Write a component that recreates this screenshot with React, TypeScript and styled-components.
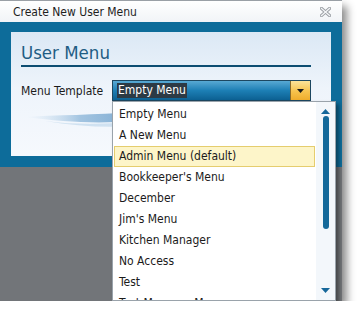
import React from 'react';
import styled, { createGlobalStyle } from 'styled-components';

const GlobalStyle = createGlobalStyle`
  html, body {
    margin: 0;
    padding: 0;
    background: #ffffff;
  }
  body {
    font-family: Tahoma, "DejaVu Sans Condensed", "Liberation Sans", sans-serif;
    font-size: 12px;
    color: #1b1b1b;
  }
`;

const templates = [
  'Empty Menu',
  'A New Menu',
  'Admin Menu (default)',
  "Bookkeeper's Menu",
  'December',
  "Jim's Menu",
  'Kitchen Manager',
  'No Access',
  'Test',
  'Test Manager Menu',
];

const App: React.FC = () => {
  return (
    <>
      <GlobalStyle />
      <Window>
        <TitleBar>
          <Title>Create New User Menu</Title>
          <CloseIcon />
        </TitleBar>
        <Frame>
          <Panel>
            <Heading>User Menu</Heading>
            <Row>
              <Label>Menu Template</Label>
              <Combo>
                <ComboField>
                  <Selected>Empty Menu</Selected>
                </ComboField>
                <ComboButton>
                  <svg width="7" height="4" viewBox="0 0 7 4">
                    <path d="M0 0 H7 L3.5 4 Z" fill="#1a1a1a" />
                  </svg>
                </ComboButton>
                <List>
                  <Items>
                    {templates.map((t, i) => (
                      <Item key={t} $active={i === 2}>{t}</Item>
                    ))}
                  </Items>
                  <Scrollbar>
                    <svg width="9" height="5" viewBox="0 0 9 5">
                      <path d="M0 5 L4.5 0 L9 5 Z" fill="#16679a" />
                    </svg>
                    <Thumb />
                    <svg width="9" height="5" viewBox="0 0 9 5">
                      <path d="M0 0 H9 L4.5 5 Z" fill="#16679a" />
                    </svg>
                  </Scrollbar>
                </List>
              </Combo>
            </Row>
            <Swoosh width="110" height="24" viewBox="0 0 110 24">
              <defs>
                <linearGradient id="sw" x1="0" x2="1" y1="0" y2="0">
                  <stop offset="0" stopColor="#cfe2f2" stopOpacity="0" />
                  <stop offset="0.5" stopColor="#8fb8da" />
                  <stop offset="1" stopColor="#5f97c6" />
                </linearGradient>
              </defs>
              <path d="M0 10 C30 8 70 8 110 5 L110 14 C70 17 40 15 0 10 Z" fill="url(#sw)" opacity="0.8" />
              <path d="M20 14 C50 18 80 17 110 15 L110 19 C80 21 50 19 20 14 Z" fill="#b9d3ea" opacity="0.6" />
            </Swoosh>
          </Panel>
        </Frame>
        <Backdrop />
      </Window>
    </>
  );
};

const CloseIcon: React.FC = () => (
  <svg width="11" height="10" viewBox="0 0 11 10">
    <path d="M1.5 1.5 L9.5 8.5 M9.5 1.5 L1.5 8.5" stroke="#9a9ea3" strokeWidth="3.2" strokeLinecap="square" />
    <path d="M1.5 1.5 L9.5 8.5 M9.5 1.5 L1.5 8.5" stroke="#f4f6f8" strokeWidth="1.3" strokeLinecap="square" />
  </svg>
);

export default App;

const Window = styled.div`
  width: 342px;
  height: 301px;
  display: flex;
  flex-direction: column;
  border-top: 1px solid #9aa0a6;
  box-sizing: border-box;
  box-shadow: 5px 6px 8px rgba(0, 0, 0, 0.45);
`;

const TitleBar = styled.div`
  flex-shrink: 0;
  height: 21px;
  display: flex;
  align-items: center;
  justify-content: space-between;
  padding: 0 11px 0 13px;
  background: linear-gradient(#ffffff, #f1f4f7);
`;

const Title = styled.span`
  font-size: 12px;
  color: #1e1e1e;
`;

const Frame = styled.div`
  flex-shrink: 0;
  background: #0d6c9a;
  padding: 10px 11px 11px 11px;
`;

const Panel = styled.div`
  height: 124px;
  box-sizing: border-box;
  padding: 10px 20px 0 10px;
  background: linear-gradient(#dbe8f5, #eef4fb 45%, #f6f9fd);
`;

const Heading = styled.h2`
  margin: 0;
  font-weight: normal;
  font-size: 18.5px;
  line-height: 22px;
  color: #1f5d84;
  padding-bottom: 1px;
  border-bottom: 2px solid #0c4d72;
`;

const Row = styled.div`
  display: flex;
  align-items: center;
  margin-top: 13px;
`;

const Label = styled.span`
  width: 91px;
  font-size: 12px;
`;

const Combo = styled.div`
  position: relative;
  width: 199px;
  height: 21px;
  display: flex;
  box-sizing: border-box;
  border: 1px solid #1d4760;
`;

const ComboField = styled.div`
  flex: 1;
  display: flex;
  align-items: center;
  padding-left: 4px;
  background: linear-gradient(#58a9d4, #1d7fb5 50%, #0c6092);
`;

const Selected = styled.span`
  background: #2c3a45;
  color: #ffffff;
  font-size: 12px;
  line-height: 15px;
  padding: 0 1px;
`;

const ComboButton = styled.div`
  width: 19px;
  display: flex;
  align-items: center;
  justify-content: center;
  border-left: 1px solid #8a6a2a;
  background: linear-gradient(#fbe39a, #f6c24d 55%, #efad2c);
`;

const List = styled.div`
  position: absolute;
  top: 20px;
  left: -1px;
  width: 224px;
  height: 200px;
  box-sizing: border-box;
  display: flex;
  background: #ffffff;
  border: 1px solid #9aa3ab;
  box-shadow: 3px 3px 4px rgba(0, 0, 0, 0.4);
  overflow: hidden;
  z-index: 2;
`;

const Items = styled.div`
  flex: 1;
  padding: 2px 1px 0 1px;
`;

const Item = styled.div<{ $active?: boolean }>`
  height: 21px;
  line-height: 19px;
  box-sizing: border-box;
  padding-left: 4px;
  font-size: 12px;
  color: #1b1b1b;
  white-space: nowrap;
  border: 1px solid ${({ $active }) => ($active ? '#e5cd6e' : 'transparent')};
  background: ${({ $active }) => ($active ? '#fdf5c9' : 'transparent')};
`;

const Scrollbar = styled.div`
  width: 19px;
  display: flex;
  flex-direction: column;
  align-items: center;
  justify-content: space-between;
  padding: 7px 0 7px;
  box-sizing: border-box;
  background: #f3f7fb;
`;

const Thumb = styled.div`
  width: 6px;
  height: 113px;
  margin-top: 2px;
  margin-bottom: auto;
  border-radius: 3px;
  background: #14699a;
`;

const Swoosh = styled.svg`
  display: block;
  margin-top: 6px;
  margin-left: 4px;
`;

const Backdrop = styled.div`
  flex: 1;
  background: #727579;
`;
